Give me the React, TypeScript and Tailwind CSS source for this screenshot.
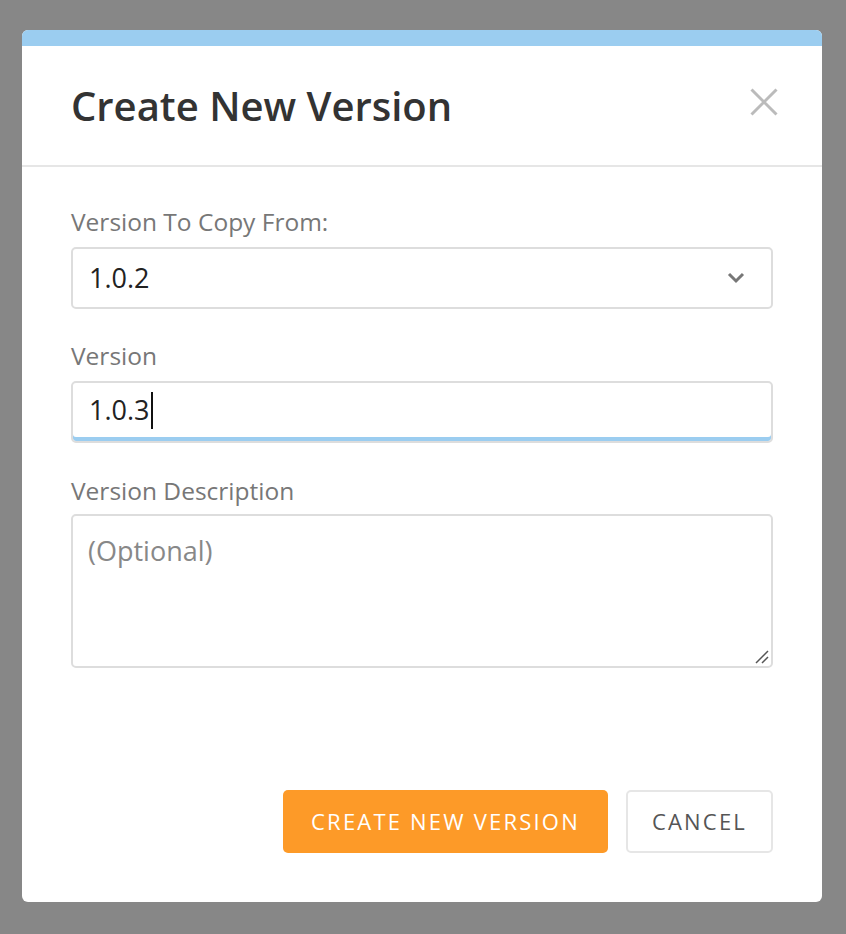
import React from "react";

function Label({ children }: { children: React.ReactNode }) {
  return (
    <div className="text-[24.5px] leading-[30px] text-[#777777] font-['Open_Sans',sans-serif]">
      {children}
    </div>
  );
}

export default function App() {
  return (
    <div className="w-full h-[934px] bg-[#878787] pt-[30px] pl-[22px] font-['Open_Sans',sans-serif]">
      <div className="w-[800px] h-[872px] bg-white rounded-[6px] overflow-hidden flex flex-col">
        <div className="h-[16px] bg-[#9bcdf0]" />
        <div className="h-[121px] border-b-2 border-[#e6e6e6] flex items-center justify-between pl-[49px] pr-[44px]">
          <h1 className="text-[40px] leading-[54px] text-[#333333] font-semibold">Create New Version</h1>
          <svg width="28" height="28" viewBox="0 0 28 28" className="mb-[7px]">
            <path d="M1.5 1.5 L26.5 26.5 M26.5 1.5 L1.5 26.5" stroke="#bbbbbb" strokeWidth="3" strokeLinecap="butt" />
          </svg>
        </div>
        <div className="flex-1 flex flex-col px-[49px] pt-[40px] pb-[49px]">
          <Label>Version To Copy From:</Label>
          <div className="mt-[10px] h-[62px] border-2 border-[#dddddd] rounded-[5px] flex items-center justify-between pl-[16px] pr-[26px]">
            <span className="text-[27px] text-[#222222]">1.0.2</span>
            <svg width="18" height="12" viewBox="0 0 18 12">
              <path d="M2 2 L9 9 L16 2" fill="none" stroke="#777777" strokeWidth="3" />
            </svg>
          </div>
          <div className="mt-[32px]">
            <Label>Version</Label>
          </div>
          <div className="mt-[10px] h-[62px] border-2 border-[#dddddd] rounded-[5px] shadow-[inset_0_-4px_0_#9bcdf0] flex items-center pl-[16px] pb-[4px]">
            <span className="text-[27px] text-[#222222]">1.0.3</span>
            <span className="w-[2px] h-[37px] bg-[#111111] ml-[1px]" />
          </div>
          <div className="mt-[33px]">
            <Label>Version Description</Label>
          </div>
          <div className="relative mt-[8px] h-[154px] border-2 border-[#dddddd] rounded-[5px] pl-[15px] pt-[15px]">
            <span className="text-[27px] leading-[40px] text-[#888888]">(Optional)</span>
            <svg width="14" height="14" viewBox="0 0 14 14" className="absolute right-[2px] bottom-[2px]">
              <path d="M1 13 L13 1 M7 13 L13 7" stroke="#555555" strokeWidth="1.5" />
            </svg>
          </div>
          <div className="flex-1" />
          <div className="flex justify-end gap-[18px]">
            <button className="h-[63px] w-[325px] bg-[#fd9a28] rounded-[5px] text-white text-[22px] tracking-[0.1em] uppercase">
              Create New Version
            </button>
            <button className="h-[63px] w-[147px] border-2 border-[#e6e6e6] rounded-[5px] text-[#555555] text-[22px] tracking-[0.1em] uppercase">
              Cancel
            </button>
          </div>
        </div>
      </div>
    </div>
  );
}
